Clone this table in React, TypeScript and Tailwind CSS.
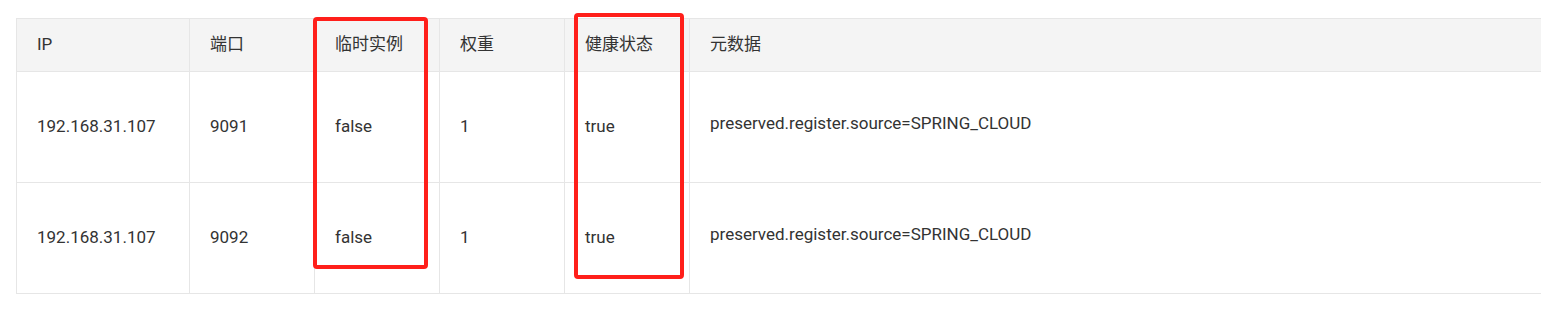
const HEADERS = ["IP", "端口", "临时实例", "权重", "健康状态", "元数据"];

const ROWS = [
  ["192.168.31.107", "9091", "false", "1", "true", "preserved.register.source=SPRING_CLOUD"],
  ["192.168.31.107", "9092", "false", "1", "true", "preserved.register.source=SPRING_CLOUD"],
];

const WIDTHS = ["w-[173px]", "w-[125px]", "w-[125px]", "w-[125px]", "w-[125px]", "flex-1"];

function Cell({ text, width, meta }: { text: string; width: string; meta?: boolean }) {
  return (
    <div
      className={`${width} shrink-0 flex items-center border-r border-[#e6e6e6] pl-[20px] ${meta ? "pb-[7px]" : ""}`}
    >
      {text}
    </div>
  );
}

export default function App() {
  return (
    <div
      className="relative h-[319px] w-[1541px] overflow-hidden bg-white pt-[18px] pl-[16px] text-[17px] text-[#333]"
      style={{ fontFamily: 'Roboto, "Noto Sans CJK SC", sans-serif' }}
    >
      <div className="w-[1540px] border-t border-l border-[#e6e6e6]">
        <div className="flex h-[53px] border-b border-[#e6e6e6] bg-[#f4f4f4]">
          {HEADERS.map((h, i) => (
            <Cell key={h} text={h} width={WIDTHS[i]} />
          ))}
        </div>
        {ROWS.map((row, r) => (
          <div key={r} className="flex h-[111px] border-b border-[#e6e6e6]">
            {row.map((c, i) => (
              <Cell key={i} text={c} width={WIDTHS[i]} meta={i === 5} />
            ))}
          </div>
        ))}
      </div>

      {/* annotation boxes */}
      <div className="absolute left-[313px] top-[17px] h-[252px] w-[115px] rounded-[4px] border-[4px] border-[#ff1f1a]" />
      <div className="absolute left-[574px] top-[13px] h-[266px] w-[110px] rounded-[4px] border-[4px] border-[#ff1f1a]" />
    </div>
  );
}
